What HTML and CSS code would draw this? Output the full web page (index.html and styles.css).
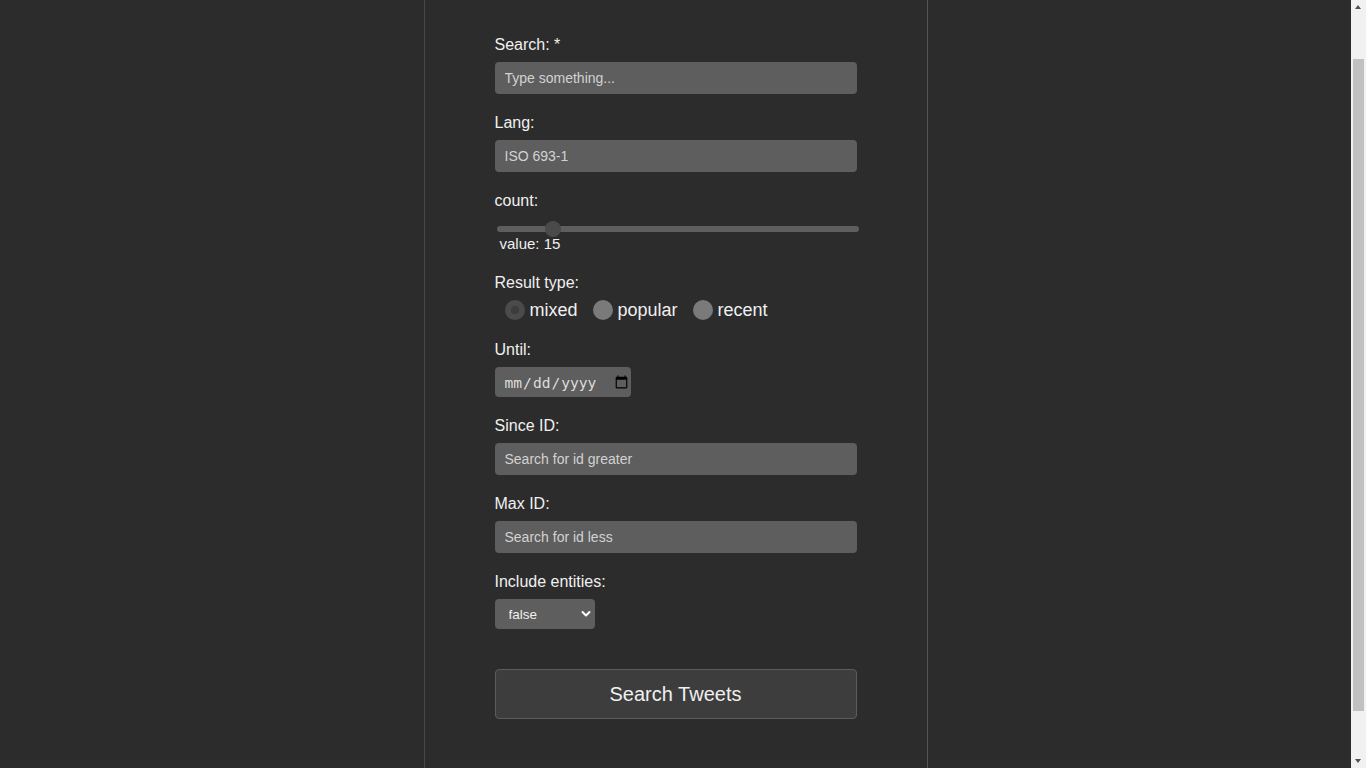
FILE: index.html
```html
<!DOCTYPE html>
<html lang="en">
<head>
<meta charset="utf-8">
<title>Search Tweets</title>
<link rel="stylesheet" href="styles.css">
</head>
<body>
<main class="page">
  <form class="search-form">
    <div class="field">
      <label class="lbl" for="q">Search: *</label>
      <input class="text-input" id="q" type="text" placeholder="Type something...">
    </div>
    <div class="field">
      <label class="lbl" for="lang">Lang:</label>
      <input class="text-input" id="lang" type="text" placeholder="ISO 693-1">
    </div>
    <div class="field field-count">
      <label class="lbl" for="count">count:</label>
      <div class="range-wrap">
        <input class="range" id="count" type="range" min="1" max="100" value="15">
      </div>
      <span class="range-value">value: 15</span>
    </div>
    <div class="field field-radio">
      <span class="lbl">Result type:</span>
      <div class="radio-row">
        <input class="radio" type="radio" name="rt" id="rt-mixed" checked>
        <label class="radio-label" for="rt-mixed">mixed</label>
        <input class="radio" type="radio" name="rt" id="rt-popular">
        <label class="radio-label" for="rt-popular">popular</label>
        <input class="radio" type="radio" name="rt" id="rt-recent">
        <label class="radio-label" for="rt-recent">recent</label>
      </div>
    </div>
    <div class="field">
      <label class="lbl" for="until">Until:</label>
      <input class="date-input" id="until" type="date">
    </div>
    <div class="field">
      <label class="lbl" for="since">Since ID:</label>
      <input class="text-input" id="since" type="text" placeholder="Search for id greater">
    </div>
    <div class="field">
      <label class="lbl" for="max">Max ID:</label>
      <input class="text-input" id="max" type="text" placeholder="Search for id less">
    </div>
    <div class="field field-select">
      <label class="lbl" for="ent">Include entities:</label>
      <div class="select-wrap">
        <select class="select" id="ent">
          <option>false</option>
          <option>true</option>
        </select>
        <svg class="chev" width="10" height="8" viewBox="0 0 10 8"><path d="M1.5 2 L5 5.5 L8.5 2" fill="none" stroke="#ffffff" stroke-width="2" stroke-linecap="round" stroke-linejoin="round"/></svg>
      </div>
    </div>
    <button class="submit" type="button">Search Tweets</button>
  </form>
</main>
<div class="fake-scrollbar" aria-hidden="true">
  <span class="sb-arrow sb-up"></span>
  <span class="sb-thumb"></span>
  <span class="sb-arrow sb-down"></span>
</div>
<script src="scroll.js"></script>
</body>
</html>
```
FILE: styles.css
```css
html {
  background: #2c2c2c;
}
body {
  margin: 0;
  padding-right: 15px;
  background: #2c2c2c;
  color: #f0f0f0;
  font-family: "Liberation Sans", Arial, sans-serif;
}
.page {
  width: 362px;
  margin: 0 auto;
  padding: 87px 70px 96px;
  border-left: 1px solid #474747;
  border-right: 1px solid #555555;
}
.search-form {
  display: flex;
  flex-direction: column;
}
.field {
  margin-bottom: 19px;
}
.lbl {
  display: block;
  font-size: 16px;
  line-height: 18px;
  padding-top: 1px;
  margin-bottom: 8px;
  color: #f0f0f0;
}
.text-input {
  display: block;
  box-sizing: border-box;
  width: 100%;
  height: 32px;
  margin: 0;
  padding: 0 10px;
  border: none;
  border-radius: 4px;
  background: #5e5e5e;
  color: #eeeeee;
  font-family: "Liberation Sans", Arial, sans-serif;
  font-size: 14px;
  outline: none;
}
.text-input::placeholder {
  color: #d2d2d2;
}
.field-count {
  margin-bottom: 22px;
}
.range-wrap {
  padding: 3px 0 0 2px;
  height: 16px;
}
.range {
  -webkit-appearance: none;
  appearance: none;
  display: block;
  width: 362px;
  height: 16px;
  margin: 0;
  padding: 0;
  background: transparent;
}
.range::-webkit-slider-runnable-track {
  height: 6px;
  border-radius: 3px;
  background: #5e5e5e;
}
.range::-webkit-slider-thumb {
  -webkit-appearance: none;
  appearance: none;
  width: 16px;
  height: 16px;
  margin-top: -5px;
  border-radius: 50%;
  background: #4a4a4a;
  border: none;
}
.range-value {
  display: block;
  margin-left: 5px;
  font-size: 15px;
  line-height: 14px;
}
.field-radio {
  margin-bottom: 20px;
}
.radio-row {
  display: flex;
  align-items: center;
  height: 20px;
}
.radio {
  -webkit-appearance: none;
  appearance: none;
  flex: none;
  width: 20px;
  height: 20px;
  margin: 0 5px 0 10px;
  border-radius: 50%;
  background: #7a7a7a;
}
.radio:checked {
  background: radial-gradient(circle, #3d3d3d 0 4px, #4b4b4b 4.6px);
}
.radio-label {
  font-size: 18px;
  line-height: 20px;
  margin-right: 5px;
}
.date-input {
  display: block;
  box-sizing: border-box;
  width: 136px;
  height: 30px;
  margin: 0;
  padding: 0 0 0 9px;
  border: none;
  border-radius: 4px;
  background: #5e5e5e;
  color: #dddddd;
  font-family: "DejaVu Sans Mono", monospace;
  font-size: 14.6px;
  outline: none;
}
.field-select {
  margin-bottom: 40px;
}
.select-wrap {
  position: relative;
  width: 100px;
  height: 30px;
}
.select {
  -webkit-appearance: none;
  appearance: none;
  display: block;
  box-sizing: border-box;
  width: 100px;
  height: 30px;
  margin: 0;
  padding: 0 0 0 14px;
  border: none;
  border-radius: 4px;
  background: #5e5e5e;
  color: #f0f0f0;
  font-family: "Liberation Sans", Arial, sans-serif;
  font-size: 13.5px;
  outline: none;
}
.chev {
  position: absolute;
  right: 4px;
  top: 11px;
  pointer-events: none;
}
.submit {
  display: block;
  box-sizing: border-box;
  width: 100%;
  height: 50px;
  margin: 0;
  border: 1px solid #5c5c5c;
  border-radius: 4px;
  background: #3d3d3d;
  color: #f0f0f0;
  font-family: "Liberation Sans", Arial, sans-serif;
  font-size: 20px;
  cursor: pointer;
}
.fake-scrollbar {
  position: fixed;
  top: 0;
  right: 0;
  width: 15px;
  height: 100vh;
  background: #f1f1f1;
}
.sb-thumb {
  position: absolute;
  left: 2px;
  width: 11px;
  top: 59px;
  height: 652px;
  background: #c1c1c1;
}
.sb-arrow {
  position: absolute;
  left: 4px;
  width: 0;
  height: 0;
  border-left: 3.5px solid transparent;
  border-right: 3.5px solid transparent;
}
.sb-up {
  top: 5px;
  border-bottom: 4px solid #505050;
}
.sb-down {
  bottom: 5px;
  border-top: 4px solid #505050;
}
```
FILE: scroll.js
```js
window.scrollTo(0, 52);
```
